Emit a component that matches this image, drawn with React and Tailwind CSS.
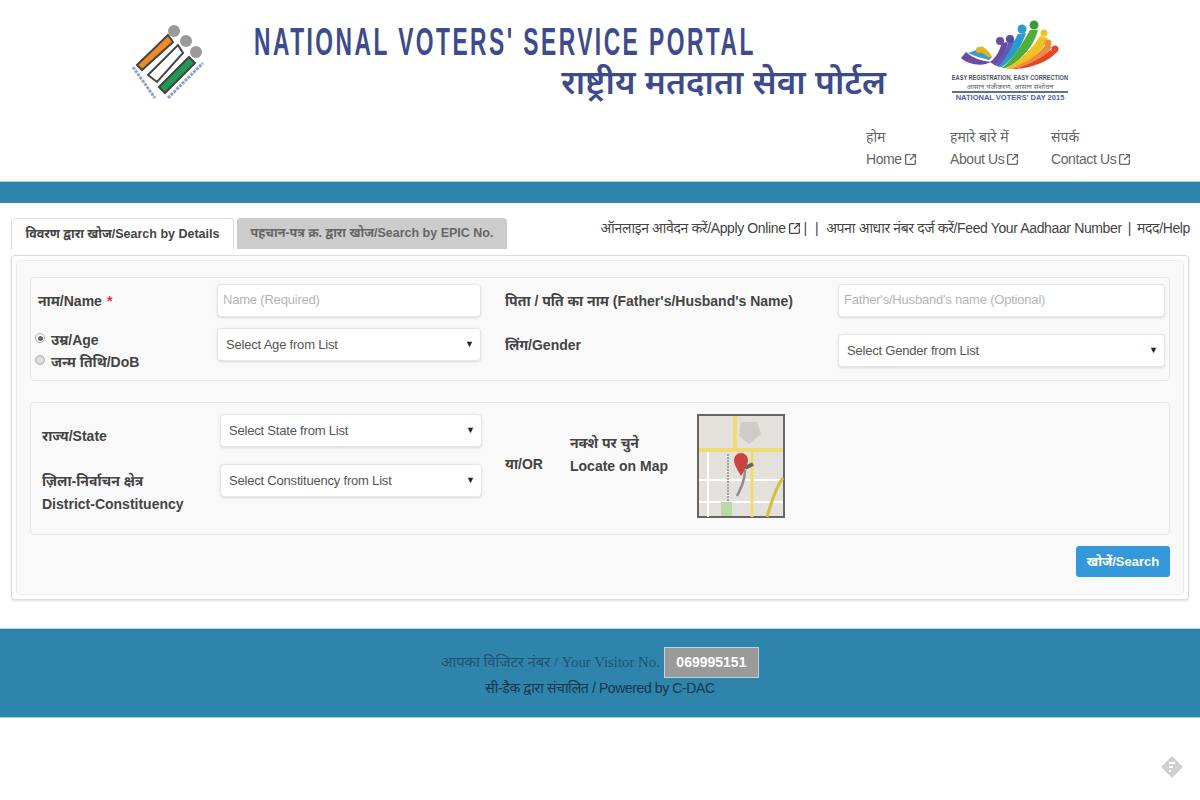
import { SquareArrowOutUpRight } from 'lucide-react';

const sans = 'font-["Liberation_Sans","Noto_Sans_Devanagari","Lohit_Devanagari","Noto_Sans",sans-serif]';

function EciLogo() {
  return (
    <svg width="80" height="80" viewBox="0 0 80 80" className="block">
      <circle cx="42" cy="7" r="6" fill="#9a9a9a" />
      <circle cx="54" cy="17" r="6" fill="#9a9a9a" />
      <circle cx="64" cy="28" r="6" fill="#9a9a9a" />
      <path d="M5 41 L36 11 L41 18 L10 46 Z" fill="#f08a24" stroke="#444" strokeWidth="2" />
      <path d="M16 51 L46 21 L51 29 L25 58 Z" fill="#fff" stroke="#444" strokeWidth="2" />
      <path d="M27 63 L57 33 L63 39 L33 69 Z" fill="#1f9a54" stroke="#444" strokeWidth="2" />
      <path d="M1 43 L23 74" stroke="#8ea2cf" strokeWidth="3" strokeDasharray="3 1" fill="none" />
      <path d="M36 74 L71 39" stroke="#8ea2cf" strokeWidth="3" strokeDasharray="3 1" fill="none" />
    </svg>
  );
}

function VotersDayLogo() {
  return (
    <div className="flex flex-col items-center w-[116px]">
      <svg width="100" height="50" viewBox="0 0 100 50" className="block">
        <path d="M1 38 C10 46 24 46 31 42 C22 41 12 38 6 32 Z" fill="#6a4aa5" />
        <path d="M8 33 C14 36 22 38 29 40 L32 37 C28 36 26 35 24 33 L16 30 Z" fill="#3f9ad0" />
        <path d="M16 30 C20 32 24 33 28 37 L32 37 C30 32 26 29 22 26 Z" fill="#e8b21f" />
        <path d="M30 42 C38 36 40 28 42 23 L48 22 L44 36 L36 46 Z" fill="#6a4aa5" />
        <path d="M36 44 C44 36 46 28 48 23 L56 20 C52 32 48 40 38 47 Z" fill="#5a5fb5" />
        <path d="M38 47 C48 38 52 24 58 14 L66 13 C62 26 52 40 42 47 Z" fill="#2a9bd0" />
        <path d="M42 48 C54 38 62 24 70 10 L78 10 C74 26 60 42 46 48 Z" fill="#4fae3a" />
        <path d="M46 49 C60 40 72 30 80 16 L88 18 C82 34 66 44 50 49 Z" fill="#f2c01f" />
        <path d="M50 49 C66 42 78 36 86 24 L92 27 C84 38 68 47 50 49 Z" fill="#ee8a3c" />
        <path d="M52 49 C68 46 82 38 90 30 L97 32 C88 42 70 49 52 49 Z" fill="#e5442c" />
        <circle cx="19" cy="30" r="3" fill="#e8b21f" />
        <circle cx="40" cy="21" r="4" fill="#6a4aa5" />
        <circle cx="50" cy="19" r="4" fill="#5a4aa5" />
        <circle cx="62" cy="9" r="4.5" fill="#2a9bd0" />
        <circle cx="74" cy="5" r="4.5" fill="#3f9a3a" />
        <circle cx="84" cy="13" r="3.5" fill="#f2c01f" />
        <circle cx="88" cy="23" r="3.5" fill="#ee8a3c" />
        <circle cx="95" cy="29" r="3.5" fill="#e5442c" />
      </svg>
      <div className={`${sans} text-[8px] leading-[10px] font-bold text-[#4a4f63] whitespace-nowrap mt-[3px] scale-x-[0.7]`}>
        EASY REGISTRATION, EASY CORRECTION
      </div>
      <div className={`${sans} text-[7px] leading-[8px] text-[#5a5f72] whitespace-nowrap border-b-2 border-[#6a6f80] w-full text-center`}>
        आसान पंजीकरण, आसान संशोधन
      </div>
      <div className={`${sans} text-[7.5px] leading-[9px] font-bold text-[#4a63a8] whitespace-nowrap`}>
        NATIONAL VOTERS' DAY 2015
      </div>
    </div>
  );
}

function MapThumb() {
  return (
    <svg width="88" height="104" viewBox="0 0 88 104" className="block">
      <rect x="1" y="1" width="86" height="102" fill="#e4e1dc" stroke="#666" strokeWidth="2" />
      <path d="M11 38 V103 M2 66 H86 M2 88 H86" stroke="#fff" strokeWidth="2" />
      <path d="M31 40 V90" stroke="#8a8a8a" strokeWidth="1.5" strokeDasharray="2 1" />
      <path d="M38 2 V36" stroke="#f0dc6e" strokeWidth="4" />
      <path d="M55 36 V103" stroke="#f0dc6e" strokeWidth="3" />
      <path d="M2 36 H86" stroke="#f0dc6e" strokeWidth="4" />
      <path d="M44 8 H60 L64 20 L52 30 L42 22Z" fill="#cfccc6" />
      <rect x="24" y="88" width="11" height="14" fill="#bcd8a8" />
      <path d="M86 64 C78 74 74 90 70 103" stroke="#d8bd3a" strokeWidth="3" fill="none" />
      <path d="M48 56 C48 66 44 74 40 82" stroke="#8c8c8c" strokeWidth="2.5" fill="none" />
      <path d="M48 54 L56 50" stroke="#666" strokeWidth="4" />
      <path d="M44 62 C38 52 37 49 37 46 A7 7 0 0 1 51 46 C51 49 49 54 44 62Z" fill="#c8453f" />
    </svg>
  );
}

function Select({ label, className = '' }) {
  return (
    <div className={`h-[33px] bg-white border border-[#e6e6e6] rounded shadow-sm flex items-center justify-between pl-[8px] pr-[6px] text-[13px] font-normal text-[#555] ${className}`}>
      <span className="tracking-[-0.2px] mt-[1px]">{label}</span>
      <span className="text-[9px] text-[#222]">▼</span>
    </div>
  );
}

function TextBox({ placeholder, className = '' }) {
  return (
    <div className={`h-[33px] bg-white border border-[#e6e6e6] rounded shadow-sm flex items-center pl-[5px] text-[13px] font-normal text-[#b5b5b5] tracking-[-0.2px] ${className}`}>
      <span className="-mt-[1px]">{placeholder}</span>
    </div>
  );
}

function LinkIcon({ className = '' }) {
  return <SquareArrowOutUpRight className={`w-[13px] h-[13px] ${className}`} strokeWidth={2.5} />;
}

function NavItem({ hi, en, className = '' }) {
  return (
    <div className={`text-[14px] leading-[22px] text-[#666] ${className}`}>
      <div>{hi}</div>
      <div className="flex items-center gap-[2px] tracking-[-0.4px]">
        {en}
        <LinkIcon />
      </div>
    </div>
  );
}

export default function App() {
  return (
    <div className={`${sans} bg-white w-[1200px] h-[800px] overflow-hidden relative text-[#444]`}>
      <header className="h-[181px] pl-[132px] pt-[20px]">
        <div className="flex items-start">
          <div className="mt-[4px]"><EciLogo /></div>
          <div className="ml-[42px] w-[632px] mt-[1px]">
            <div className="text-[38px] leading-[42px] text-[#3d4a8c] tracking-[4.1px] whitespace-nowrap origin-left scale-x-[0.6] font-semibold">
              NATIONAL VOTERS' SERVICE PORTAL
            </div>
            <div className="text-[33.5px] leading-[40px] font-semibold text-[#3d4a8c] text-right whitespace-nowrap">
              राष्ट्रीय मतदाता सेवा पोर्टल
            </div>
          </div>
          <div className="ml-[66px]"><VotersDayLogo /></div>
        </div>
        <div className="flex pl-[734px] mt-[22px]">
          <NavItem hi="होम" en="Home" className="w-[84px]" />
          <NavItem hi="हमारे बारे में" en="About Us" className="w-[101px]" />
          <NavItem hi="संपर्क" en="Contact Us" />
        </div>
      </header>

      <div className="h-[22px] bg-[#2e84aa] border-t border-[#a9d3e6]" />

      <div className="flex justify-between items-start pl-[11px] pr-[10px] pt-[15px] h-[52px]">
        <div className="flex gap-[3px] text-[12.5px] font-bold">
          <div className="h-[32px] w-[223px] bg-white border border-b-0 border-[#ddd] rounded-t flex items-center justify-center text-[#444] relative z-10 whitespace-nowrap">
            विवरण द्वारा खोज/Search by Details
          </div>
          <div className="h-[31px] w-[270px] bg-[#cccccc] rounded-t flex items-center justify-center text-[#666] whitespace-nowrap">
            पहचान-पत्र क्र. द्वारा खोज/Search by EPIC No.
          </div>
        </div>
        <div className="flex items-center text-[14px] text-[#444] tracking-[-0.37px] whitespace-nowrap mt-[-2px] h-[24px]">
          <span>ऑनलाइन आवेदन करें/Apply Online</span>
          <LinkIcon className="ml-[2px]" />
          <span className="ml-[3px]">|</span>
          <span className="ml-[8px]">|</span>
          <span className="ml-[8px]">अपना आधार नंबर दर्ज करें/Feed Your Aadhaar Number</span>
          <span className="ml-[6px]">|</span>
          <span className="ml-[6px]">मदद/Help</span>
        </div>
      </div>

      <main className="mx-[11px] h-[345px] border border-[#ddd] rounded-sm p-[4px] bg-white shadow-sm">
        <div className="h-full bg-[#f9f9f9] border border-[#eeeeee] rounded px-[13px] pt-[16px]">
          <section className="h-[104px] border border-[#e8e8e8] rounded flex pl-[7px] pt-[6px] text-[14px] font-bold text-[#444]">
            <div className="w-[179px]">
              <div className="h-[33px] flex items-center mt-[1px]">
                नाम/Name <span className="text-red-500 ml-[5px]">*</span>
              </div>
              <div className="mt-[11px] -ml-[3px] leading-[22px]">
                <label className="flex items-center gap-[6px]">
                  <span className="w-[10px] h-[10px] rounded-full border border-[#aaa] bg-white flex items-center justify-center -mt-[4px]">
                    <span className="w-[5px] h-[5px] rounded-full bg-[#666]" />
                  </span>
                  उम्र/Age
                </label>
                <label className="flex items-center gap-[6px]">
                  <span className="w-[10px] h-[10px] rounded-full border border-[#aaa] bg-[#ddd] -mt-[4px]" />
                  जन्म तिथि/DoB
                </label>
              </div>
            </div>
            <div className="w-[264px]">
              <TextBox placeholder="Name (Required)" />
              <Select label="Select Age from List" className="mt-[11px]" />
            </div>
            <div className="w-[333px] ml-[24px]">
              <div className="h-[33px] flex items-center mt-[1px]">पिता / पति का नाम (Father's/Husband's Name)</div>
              <div className="mt-[16px] leading-[22px]">लिंग/Gender</div>
            </div>
            <div className="w-[327px]">
              <TextBox placeholder="Father's/Husband's name (Optional)" />
              <Select label="Select Gender from List" className="mt-[17px]" />
            </div>
          </section>

          <section className="h-[133px] mt-[21px] border border-[#e8e8e8] rounded flex pl-[11px] pt-[11px] text-[14px] font-bold">
            <div className="w-[178px]">
              <div className="h-[33px] mt-[6px] flex items-center">राज्य/State</div>
              <div className="mt-[17px] leading-[23px]">
                <div>ज़िला-निर्वाचन क्षेत्र</div>
                <div>District-Constituency</div>
              </div>
            </div>
            <div className="w-[262px]">
              <Select label="Select State from List" />
              <Select label="Select Constituency from List" className="mt-[17px]" />
            </div>
            <div className="ml-[23px] w-[65px] mt-[40px]">या/OR</div>
            <div className="w-[127px] mt-[18px] leading-[23px]">
              <div>नक्शे पर चुने</div>
              <div>Locate on Map</div>
            </div>
            <MapThumb />
          </section>

          <div className="flex justify-end mt-[11px]">
            <button className="w-[94px] h-[31px] bg-[#3498db] rounded-[3px] text-white text-[13px] font-bold">
              खोजें/Search
            </button>
          </div>
        </div>
      </main>

      <footer className="mt-[28px] h-[90px] bg-[#2e84aa] border-y border-[#a9d3e6] flex flex-col items-center pt-[18px]">
        <div className="flex items-center gap-[4px]">
          <span className="text-[14.8px] text-[#20536e] font-['Liberation_Serif','Noto_Sans_Devanagari',serif]">
            आपका विजिटर नंबर / Your Visitor No.
          </span>
          <span className="w-[95px] h-[31px] bg-[#9a9a9a] border border-[#b7d5e2] flex items-center justify-center text-white font-bold text-[14px]">
            069995151
          </span>
        </div>
        <div className="text-[14px] text-[#16384c] tracking-[-0.4px] leading-[22px] -mt-[1px]">
          सी-डैक द्वारा संचालित / Powered by C-DAC
        </div>
      </footer>

      {/* small badge, bottom right corner */}
      <svg width="24" height="24" viewBox="0 0 24 24" className="absolute left-[1160px] top-[755px]">
        <path d="M12 1 L23 12 L12 23 L1 12Z" fill="#d0d0d0" />
        <path d="M9 8 H15 M9 12 H13 M9 16 H11" stroke="#fff" strokeWidth="2" />
      </svg>
    </div>
  );
}
